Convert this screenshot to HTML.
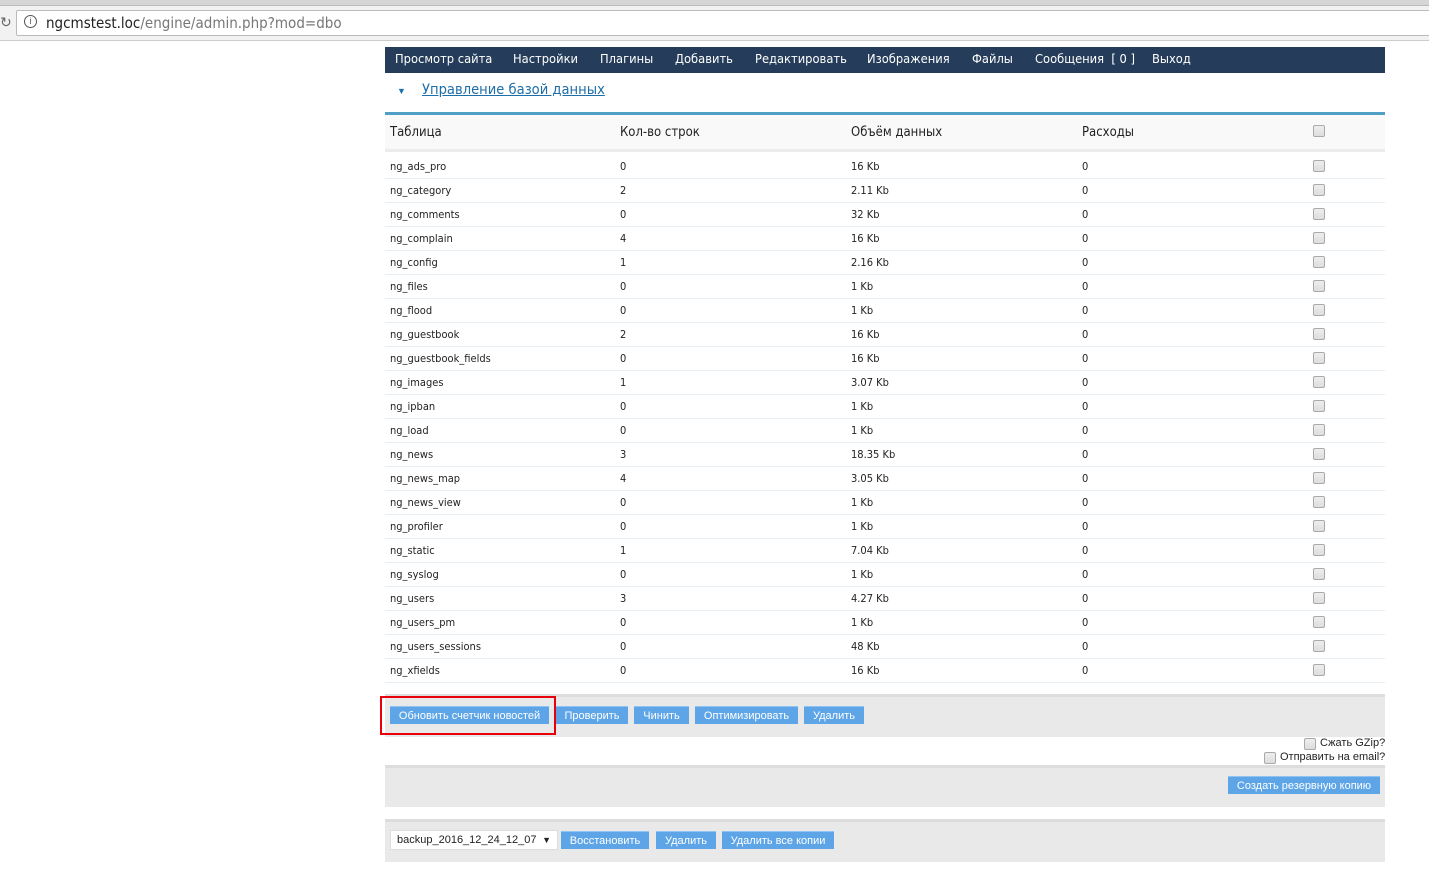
<!DOCTYPE html>
<html><head><meta charset="utf-8"><style>
*{margin:0;padding:0;box-sizing:border-box}
body{width:1429px;height:877px;background:#fff;font-family:"Liberation Sans",Arial,sans-serif;position:relative;overflow:hidden;color:#222}
.abs{position:absolute}
.tabs{left:0;top:0;width:1429px;height:6px;background:#d6d6d6;border-bottom:1px solid #bbb}
.addr{left:0;top:6px;width:1429px;height:35px;background:#f2f2f2;border-bottom:1px solid #ccc}
.box{left:16px;top:10px;width:1420px;height:26px;background:#fff;border:1px solid #bbb;border-radius:2px}
.url{left:46px;top:14px;font-size:15px;font-family:"DejaVu Sans Condensed","Liberation Sans",sans-serif;color:#222}
.url span{color:#777}
.nav{left:385px;top:47px;width:1000px;height:26px;background:#253d5a;color:#fff;font-size:12.8px;font-family:"DejaVu Sans Condensed","Liberation Sans",sans-serif;line-height:26px}
.nav span{position:absolute;top:0}
.title{left:422px;top:81px;font-size:14.6px;color:#1e6ea8;text-decoration:underline;font-family:"DejaVu Sans Condensed","Liberation Sans",sans-serif}
.chev{left:397px;top:86px;font-size:9px;color:#1e6ea8}
.bl{left:385px;top:112px;width:1000px;height:3px;background:#4fa0c4}
.th{left:385px;top:115px;width:1000px;height:37px;background:#f9f9f9;border-bottom:3px solid #ececec;font-size:13px;font-family:"DejaVu Sans Condensed","Liberation Sans",sans-serif}
.th span{position:absolute;top:10px}
.row{position:absolute;left:385px;width:1000px;height:24px;border-bottom:1px solid #e6edf3;font-size:11px;font-family:"DejaVu Sans Condensed","Liberation Sans",sans-serif}
.row span{position:absolute;top:5px}
.cb{position:absolute;width:12px;height:12px;border:1px solid #aaa;border-radius:2px;background:linear-gradient(#eee,#ddd)}
.bar{position:absolute;left:385px;width:1000px;background:#e9e9e9;border-top:3px solid #ddd}
.btn{position:absolute;height:18px;background:#5ea5e8;color:#fff;font-size:11px;line-height:18px;text-align:center;border-top:1px solid #8ec3f2}
.lab{position:absolute;font-size:11px;color:#222}
</style></head><body>
<div class="abs tabs"></div>
<div class="abs addr"></div>
<div class="abs box"></div>
<div class="abs" style="left:0;top:14px;font-size:14px;color:#666">↻</div>
<div class="abs" style="left:24px;top:15px;width:13px;height:13px;border:1px solid #555;border-radius:50%;font-size:9px;text-align:center;line-height:11px;color:#555">i</div>
<div class="abs url">ngcmstest.loc<span>/engine/admin.php?mod=dbo</span></div>

<div class="abs nav">
<span style="left:10px">Просмотр сайта</span><span style="left:128px">Настройки</span><span style="left:215px">Плагины</span><span style="left:290px">Добавить</span><span style="left:370px">Редактировать</span><span style="left:482px">Изображения</span><span style="left:587px">Файлы</span><span style="left:650px">Сообщения &nbsp;[ 0 ]</span><span style="left:767px">Выход</span>
</div>
<div class="abs chev">▼</div>
<div class="abs title">Управление базой данных</div>
<div class="abs bl"></div>
<div class="abs th"><span style="left:5px">Таблица</span><span style="left:235px">Кол-во строк</span><span style="left:466px">Объём данных</span><span style="left:697px">Расходы</span><div class="cb" style="left:928px;top:10px"></div></div>

<div id="rows"></div>
<script>
var d=[["ng_ads_pro",0,"16 Kb"],["ng_category",2,"2.11 Kb"],["ng_comments",0,"32 Kb"],["ng_complain",4,"16 Kb"],["ng_config",1,"2.16 Kb"],["ng_files",0,"1 Kb"],["ng_flood",0,"1 Kb"],["ng_guestbook",2,"16 Kb"],["ng_guestbook_fields",0,"16 Kb"],["ng_images",1,"3.07 Kb"],["ng_ipban",0,"1 Kb"],["ng_load",0,"1 Kb"],["ng_news",3,"18.35 Kb"],["ng_news_map",4,"3.05 Kb"],["ng_news_view",0,"1 Kb"],["ng_profiler",0,"1 Kb"],["ng_static",1,"7.04 Kb"],["ng_syslog",0,"1 Kb"],["ng_users",3,"4.27 Kb"],["ng_users_pm",0,"1 Kb"],["ng_users_sessions",0,"48 Kb"],["ng_xfields",0,"16 Kb"]];
var h="";d.forEach(function(r,i){h+='<div class="row" style="top:'+(155+i*24)+'px"><span style="left:5px">'+r[0]+'</span><span style="left:235px">'+r[1]+'</span><span style="left:466px">'+r[2]+'</span><span style="left:697px">0</span><div class="cb" style="left:928px;top:5px"></div></div>';});
document.getElementById("rows").innerHTML=h;
</script>

<div class="bar" style="top:694px;height:43px"></div>
<div class="btn" style="left:390px;top:706px;width:159px">Обновить счетчик новостей</div>
<div class="btn" style="left:556px;top:706px;width:72px">Проверить</div>
<div class="btn" style="left:634px;top:706px;width:55px">Чинить</div>
<div class="btn" style="left:695px;top:706px;width:103px">Оптимизировать</div>
<div class="btn" style="left:804px;top:706px;width:60px">Удалить</div>
<div class="abs" style="left:380px;top:696px;width:176px;height:39px;border:2px solid #e8000b"></div>

<div class="cb" style="left:1304px;top:738px"></div><div class="lab" style="left:1320px;top:737px">Сжать GZip?</div>
<div class="cb" style="left:1264px;top:752px"></div><div class="lab" style="left:1280px;top:751px">Отправить на email?</div>

<div class="bar" style="top:765px;height:42px"></div>
<div class="btn" style="left:1228px;top:776px;width:152px">Создать резервную копию</div>

<div class="bar" style="top:819px;height:43px"></div>
<div class="abs" style="left:390px;top:830px;width:168px;height:20px;background:#fff;border:1px solid #ddd;font-size:11px;line-height:18px;padding-left:6px">backup_2016_12_24_12_07 <span style="position:absolute;right:6px;font-size:9px">▼</span></div>
<div class="btn" style="left:561px;top:831px;width:88px">Восстановить</div>
<div class="btn" style="left:656px;top:831px;width:60px">Удалить</div>
<div class="btn" style="left:722px;top:831px;width:112px">Удалить все копии</div>
</body></html>
